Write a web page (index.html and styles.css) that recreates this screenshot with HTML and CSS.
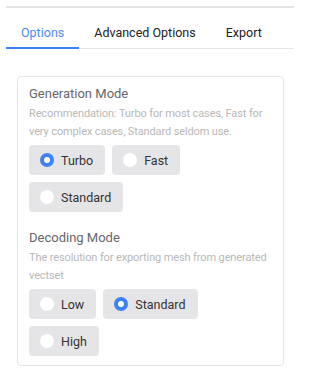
FILE: index.html
```html
<!DOCTYPE html>
<html lang="en">
<head>
    <meta charset="UTF-8">
    <meta name="viewport" content="width=device-width, initial-scale=1.0">
    <title>Options</title>
    <link rel="stylesheet" href="styles.css">
</head>
<body>
    <div class="panel">
        <div class="tabs">
            <button class="tab active">Options</button>
            <button class="tab">Advanced Options</button>
            <button class="tab">Export</button>
        </div>

        <div class="card">
            <div class="group">
                <div class="title">Generation Mode</div>
                <div class="info">Recommendation: Turbo for most cases, Fast for very complex cases, Standard seldom use.</div>
                <div class="choices">
                    <label class="choice checked"><span class="dot"></span>Turbo</label>
                    <label class="choice"><span class="dot"></span>Fast</label>
                    <label class="choice"><span class="dot"></span>Standard</label>
                </div>
            </div>

            <div class="group">
                <div class="title">Decoding Mode</div>
                <div class="info">The resolution for exporting mesh from generated vectset</div>
                <div class="choices">
                    <label class="choice"><span class="dot"></span>Low</label>
                    <label class="choice checked"><span class="dot"></span>Standard</label>
                    <label class="choice"><span class="dot"></span>High</label>
                </div>
            </div>
        </div>
    </div>
</body>
</html>
```

FILE: styles.css
```css
body {
    margin: 0;
    background-color: #fff;
    font-family: Roboto, "Liberation Sans", sans-serif;
}

.panel {
    margin: 6px 0 0 6px;
    width: 288px;
    border-top: 2px solid #e5e5e5;
}

.tabs {
    display: flex;
    margin-top: 11px;
    border-bottom: 1px solid #e5e5e5;
}

.tab {
    background: none;
    border: none;
    border-bottom: 2px solid transparent;
    margin-bottom: -1px;
    padding: 6px 15px 7px;
    font-family: inherit;
    font-size: 12.5px;
    color: #222;
    white-space: nowrap;
    cursor: pointer;
}

.tab.active {
    color: #4b8bf5;
    border-bottom-color: #3b82f6;
}

.card {
    margin: 27px 10px 0 11px;
    padding: 9px 11px 9px;
    border: 1px solid #e5e5e5;
    border-radius: 4px;
}

.group + .group {
    margin-top: 18px;
}

.title {
    font-size: 13px;
    color: #666;
    line-height: 16px;
}

.info {
    font-size: 11px;
    letter-spacing: -0.12px;
    color: #b8b8b8;
    line-height: 18px;
    margin-top: 3px;
}

.choices {
    display: flex;
    flex-wrap: wrap;
    gap: 7px;
    margin-top: 4px;
}

.choice {
    display: flex;
    align-items: center;
    gap: 7px;
    height: 30px;
    padding: 0 12px 0 11px;
    background-color: #e5e5e7;
    border-radius: 4px;
    font-size: 12.5px;
    color: #333;
}

.dot {
    width: 14px;
    height: 14px;
    border-radius: 50%;
    background-color: #fff;
    box-sizing: border-box;
}

.choice.checked .dot {
    background-color: #fff;
    border: 4px solid #3b82f6;
}
```
